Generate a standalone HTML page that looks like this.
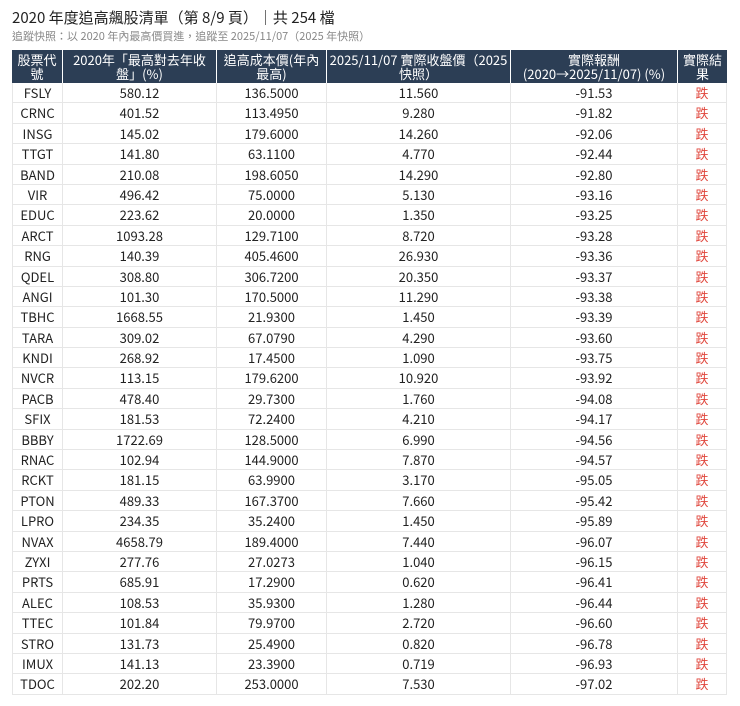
<!DOCTYPE html>
<html><head><meta charset="utf-8"><style>
*{box-sizing:border-box;}
html,body{margin:0;background:#fff;height:706px;overflow:hidden;}
body{font-family:"Liberation Sans","Noto Sans CJK TC",sans-serif;color:#222;}
.t{position:absolute;left:12px;top:7px;font-size:15px;font-family:"Noto Sans CJK TC",sans-serif;color:#222;line-height:22px;}
.s{position:absolute;left:12px;top:29px;font-size:11px;font-family:"Noto Sans CJK TC",sans-serif;color:#888;line-height:14px;}
.tb{position:absolute;left:12px;top:50px;width:715px;font-family:"Noto Sans CJK TC",sans-serif;font-size:13px;}
.r{display:flex;height:20.4px;border-bottom:1px solid #e6e6e6;}
.r>div{border-left:1px solid #e6e6e6;text-align:center;line-height:19.4px;height:19.4px;overflow:hidden;}
.r>div:last-child{border-right:1px solid #e6e6e6;}
.h{height:33px;background:#2c3e55;color:#fff;border:none;}
.h>div{height:33px!important;line-height:14px!important;display:flex;align-items:center;justify-content:center;border-left:1px solid #fff!important;padding:0 2px;}
.h>div:first-child{border-left:none!important;}
.h>div:last-child{border-right:none!important;}
.c1{width:50px}.c2{width:154px}.c3{width:110px}.c4{width:184px}.c5{width:167px}.c6{width:50px}
.d{color:#e0463c;}
</style></head><body>
<div class="t">2020 年度追高飆股清單（第 8/9 頁）｜共 254 檔</div>
<div class="s">追蹤快照：以 2020 年內最高價買進，追蹤至 2025/11/07（2025 年快照）</div>
<div class="tb">
<div class="r h"><div class="c1">股票代號</div><div class="c2">2020年「最高對去年收盤」(%)</div><div class="c3">追高成本價(年內最高)</div><div class="c4">2025/11/07 實際收盤價（2025快照）</div><div class="c5">實際報酬<br>(2020→2025/11/07) (%)</div><div class="c6">實際結果</div></div>
<div class="r"><div class="c1">FSLY</div><div class="c2">580.12</div><div class="c3">136.5000</div><div class="c4">11.560</div><div class="c5">-91.53</div><div class="c6 d">跌</div></div>
<div class="r"><div class="c1">CRNC</div><div class="c2">401.52</div><div class="c3">113.4950</div><div class="c4">9.280</div><div class="c5">-91.82</div><div class="c6 d">跌</div></div>
<div class="r"><div class="c1">INSG</div><div class="c2">145.02</div><div class="c3">179.6000</div><div class="c4">14.260</div><div class="c5">-92.06</div><div class="c6 d">跌</div></div>
<div class="r"><div class="c1">TTGT</div><div class="c2">141.80</div><div class="c3">63.1100</div><div class="c4">4.770</div><div class="c5">-92.44</div><div class="c6 d">跌</div></div>
<div class="r"><div class="c1">BAND</div><div class="c2">210.08</div><div class="c3">198.6050</div><div class="c4">14.290</div><div class="c5">-92.80</div><div class="c6 d">跌</div></div>
<div class="r"><div class="c1">VIR</div><div class="c2">496.42</div><div class="c3">75.0000</div><div class="c4">5.130</div><div class="c5">-93.16</div><div class="c6 d">跌</div></div>
<div class="r"><div class="c1">EDUC</div><div class="c2">223.62</div><div class="c3">20.0000</div><div class="c4">1.350</div><div class="c5">-93.25</div><div class="c6 d">跌</div></div>
<div class="r"><div class="c1">ARCT</div><div class="c2">1093.28</div><div class="c3">129.7100</div><div class="c4">8.720</div><div class="c5">-93.28</div><div class="c6 d">跌</div></div>
<div class="r"><div class="c1">RNG</div><div class="c2">140.39</div><div class="c3">405.4600</div><div class="c4">26.930</div><div class="c5">-93.36</div><div class="c6 d">跌</div></div>
<div class="r"><div class="c1">QDEL</div><div class="c2">308.80</div><div class="c3">306.7200</div><div class="c4">20.350</div><div class="c5">-93.37</div><div class="c6 d">跌</div></div>
<div class="r"><div class="c1">ANGI</div><div class="c2">101.30</div><div class="c3">170.5000</div><div class="c4">11.290</div><div class="c5">-93.38</div><div class="c6 d">跌</div></div>
<div class="r"><div class="c1">TBHC</div><div class="c2">1668.55</div><div class="c3">21.9300</div><div class="c4">1.450</div><div class="c5">-93.39</div><div class="c6 d">跌</div></div>
<div class="r"><div class="c1">TARA</div><div class="c2">309.02</div><div class="c3">67.0790</div><div class="c4">4.290</div><div class="c5">-93.60</div><div class="c6 d">跌</div></div>
<div class="r"><div class="c1">KNDI</div><div class="c2">268.92</div><div class="c3">17.4500</div><div class="c4">1.090</div><div class="c5">-93.75</div><div class="c6 d">跌</div></div>
<div class="r"><div class="c1">NVCR</div><div class="c2">113.15</div><div class="c3">179.6200</div><div class="c4">10.920</div><div class="c5">-93.92</div><div class="c6 d">跌</div></div>
<div class="r"><div class="c1">PACB</div><div class="c2">478.40</div><div class="c3">29.7300</div><div class="c4">1.760</div><div class="c5">-94.08</div><div class="c6 d">跌</div></div>
<div class="r"><div class="c1">SFIX</div><div class="c2">181.53</div><div class="c3">72.2400</div><div class="c4">4.210</div><div class="c5">-94.17</div><div class="c6 d">跌</div></div>
<div class="r"><div class="c1">BBBY</div><div class="c2">1722.69</div><div class="c3">128.5000</div><div class="c4">6.990</div><div class="c5">-94.56</div><div class="c6 d">跌</div></div>
<div class="r"><div class="c1">RNAC</div><div class="c2">102.94</div><div class="c3">144.9000</div><div class="c4">7.870</div><div class="c5">-94.57</div><div class="c6 d">跌</div></div>
<div class="r"><div class="c1">RCKT</div><div class="c2">181.15</div><div class="c3">63.9900</div><div class="c4">3.170</div><div class="c5">-95.05</div><div class="c6 d">跌</div></div>
<div class="r"><div class="c1">PTON</div><div class="c2">489.33</div><div class="c3">167.3700</div><div class="c4">7.660</div><div class="c5">-95.42</div><div class="c6 d">跌</div></div>
<div class="r"><div class="c1">LPRO</div><div class="c2">234.35</div><div class="c3">35.2400</div><div class="c4">1.450</div><div class="c5">-95.89</div><div class="c6 d">跌</div></div>
<div class="r"><div class="c1">NVAX</div><div class="c2">4658.79</div><div class="c3">189.4000</div><div class="c4">7.440</div><div class="c5">-96.07</div><div class="c6 d">跌</div></div>
<div class="r"><div class="c1">ZYXI</div><div class="c2">277.76</div><div class="c3">27.0273</div><div class="c4">1.040</div><div class="c5">-96.15</div><div class="c6 d">跌</div></div>
<div class="r"><div class="c1">PRTS</div><div class="c2">685.91</div><div class="c3">17.2900</div><div class="c4">0.620</div><div class="c5">-96.41</div><div class="c6 d">跌</div></div>
<div class="r"><div class="c1">ALEC</div><div class="c2">108.53</div><div class="c3">35.9300</div><div class="c4">1.280</div><div class="c5">-96.44</div><div class="c6 d">跌</div></div>
<div class="r"><div class="c1">TTEC</div><div class="c2">101.84</div><div class="c3">79.9700</div><div class="c4">2.720</div><div class="c5">-96.60</div><div class="c6 d">跌</div></div>
<div class="r"><div class="c1">STRO</div><div class="c2">131.73</div><div class="c3">25.4900</div><div class="c4">0.820</div><div class="c5">-96.78</div><div class="c6 d">跌</div></div>
<div class="r"><div class="c1">IMUX</div><div class="c2">141.13</div><div class="c3">23.3900</div><div class="c4">0.719</div><div class="c5">-96.93</div><div class="c6 d">跌</div></div>
<div class="r"><div class="c1">TDOC</div><div class="c2">202.20</div><div class="c3">253.0000</div><div class="c4">7.530</div><div class="c5">-97.02</div><div class="c6 d">跌</div></div>
</div>
</body></html>
